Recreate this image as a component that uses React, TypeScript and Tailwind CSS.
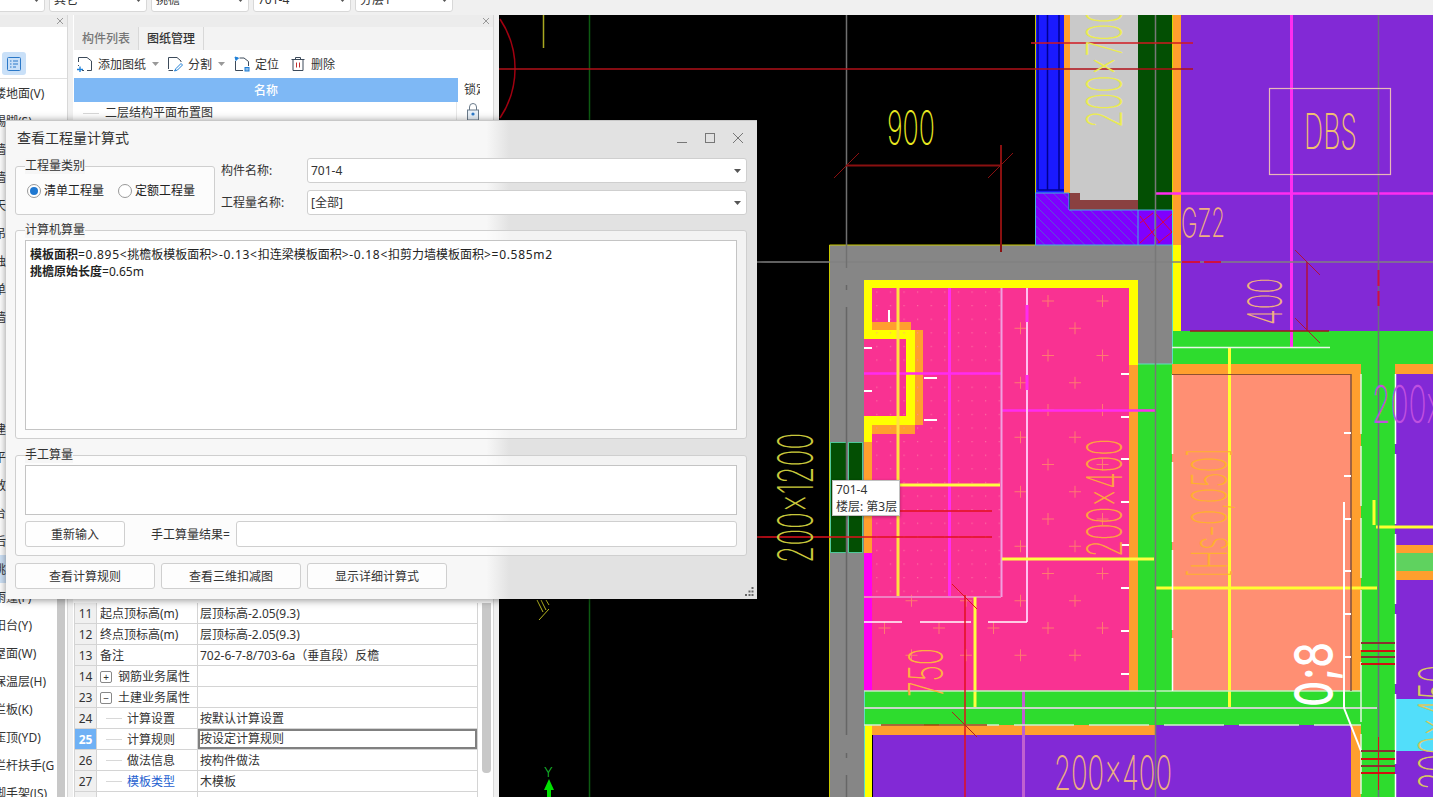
import { ReactNode } from "react";

const ORANGE = "#ff9f2e";
const PURPLE = "#8229d6";
const GREEN = "#2edc2e";
const PINK = "#f93292";
const YELLOW = "#ffff00";
const GREY = "#868686";
const MAG = "#ff2cf0";
const RED = "#e0101c";

type R = [number, number, number, number, string];
type L = [number, number, number, number, string, number?, string?];

const rects: R[] = [
  // wall
  [829, 245, 343, 35, GREY],
  [829, 245, 35, 552, GREY],
  [1138, 245, 34, 119, GREY],
  // top column
  [1035, 14, 29, 179, "#1a1aff"],
  [1064, 14, 6, 179, ORANGE],
  [1070, 14, 68, 186, "#c9c9c9"],
  [1070, 193, 10, 17, "#8a4040"],
  [1080, 200, 58, 10, "#8a4040"],
  [1138, 14, 34, 196, "#034f03"],
  [1035, 193, 34, 17, "#7f00ff"],
  [1035, 210, 103, 35, "#7f00ff"],
  [1138, 210, 34, 35, "#7f00ff"],
  // top right room
  [1181, 14, 252, 317, PURPLE],
  [1172, 14, 9, 231, ORANGE],
  [1172, 245, 9, 86, YELLOW],
  [1172, 331, 261, 33, GREEN],
  [1138, 364, 34, 327, GREEN],
  [1172, 364, 189, 10, ORANGE],
  [1172, 374, 179, 317, "#ff8f73"],
  [1351, 374, 10, 317, ORANGE],
  [1361, 364, 34, 433, GREEN],
  // right strip
  [1395, 364, 38, 10, ORANGE],
  [1395, 374, 38, 171, PURPLE],
  [1395, 545, 38, 8, ORANGE],
  [1395, 553, 38, 18, "#5fd25f"],
  [1395, 571, 38, 9, ORANGE],
  [1395, 580, 38, 119, PURPLE],
  [1395, 699, 38, 52, "#52defa"],
  [1395, 751, 38, 46, PURPLE],
  // pink slab
  [864, 280, 274, 411, PINK],
  [864, 280, 274, 8, YELLOW],
  [1129, 288, 9, 77, YELLOW],
  [1129, 365, 9, 326, ORANGE],
  [864, 288, 8, 47, YELLOW],
  [872, 322, 39, 8, ORANGE],
  [915, 330, 8, 95, ORANGE],
  [864, 330, 51, 9, YELLOW],
  [906, 330, 9, 95, YELLOW],
  [864, 416, 51, 9, YELLOW],
  [872, 425, 43, 9, ORANGE],
  [864, 425, 8, 17, YELLOW],
  [864, 442, 8, 111, ORANGE],
  [864, 553, 8, 138, "#ff00f0"],
  // bottom
  [864, 691, 497, 34, GREEN],
  [864, 725, 8, 72, YELLOW],
  [872, 725, 283, 10, ORANGE],
  [873, 735, 282, 62, PURPLE],
  [1155, 725, 196, 72, PURPLE],
  [1351, 725, 10, 72, ORANGE],
  // 701-4
  [830, 442, 17, 111, "#034f03"],
  [848, 442, 15, 111, "#034f03"],
];

const lines: L[] = [
  // blue column detail
  [1038, 14, 1038, 190, "#000090", 1.5],
  [1047.5, 14, 1047.5, 190, "#000090", 1.5],
  [1059, 14, 1059, 190, "#000090", 1.5],
  [1038, 190, 1064, 190, "#000090", 1.5],
  // edges
  [1035.5, 14, 1035.5, 245, "#c8c800"],
  [829.5, 245, 1035, 245, "#c8c800"],
  [829.5, 245, 829.5, 797, "#c8c800"],
  [1172.5, 14, 1172.5, 245, "#d8d800"],
  [1035, 193, 1069, 193, "#40b0e0"],
  [1069, 193, 1069, 210, "#40b0e0"],
  [1069, 210, 1172, 210, "#40b0e0"],
  [1035, 245, 1172, 245, "#40b0e0"],
  [1035.5, 193, 1035.5, 245, "#40b0e0"],
  [1138, 210, 1138, 245, "#40b0e0"],
  [1155, 210, 1155, 245, "#40b0e0"],
  [1172.5, 210, 1172.5, 364, "#5de0c0"],
  [1138, 364, 1172, 364, "#5de0c0"],
  [864.5, 691, 864.5, 797, "#5de0c0"],
  // red crosses
  [1140, 216, 1160, 243, "#dc0040"],
  [1155, 213, 1172, 232, "#dc0040"],
  [1140, 243, 1172, 214, "#dc0040"],
  [1140, 223, 1153, 213, "#dc0040"],
  [1158, 243, 1172, 232, "#dc0040"],
  // magenta
  [1155, 193.5, 1433, 193.5, MAG, 2.5],
  [1291.5, 14, 1291.5, 347, MAG, 3],
  [949.5, 288, 949.5, 597, MAG, 3],
  [864, 373.5, 1001, 373.5, MAG, 2.5],
  [1001, 410.5, 1155, 410.5, MAG, 2.5],
  [1001.5, 288, 1001.5, 597, "#f0a0e0", 2],
  [864, 597, 1001, 597, "#f080c0", 2],
  [1027, 288, 1027, 622, "#ffc0f0", 2],
  [1027, 305, 1027, 322, MAG, 3],
  [1027, 375, 1027, 390, MAG, 3],
  [1023.5, 691, 1023.5, 797, "#c060d0", 3],
  // yellow inside slab
  [898, 288, 898, 596, "#ffe040", 3],
  [900, 485, 1000, 485, "#ffff40", 3],
  [1002, 559, 1154, 559, "#ffff40", 3],
  [975, 597, 975, 707, "#ffff40", 3],
  [1229.5, 347, 1229.5, 707, "#ffff30", 3],
  [1156, 588, 1377, 588, "#ffff30", 3],
  [1374, 500, 1374, 525, "#ffff30", 3],
  [1376, 527, 1433, 527, "#ffff30", 3],
  // white
  [864, 622, 902, 622, "#ffffff", 1.5],
  [920, 622, 971, 622, "#ffffff", 1.5],
  [988, 622, 1027, 622, "#ffffff", 1.5],
  [864, 708, 1377, 708, "#c8d8c8", 2],
  [864, 691, 1361, 691, "#c0f0c0", 1.5],
  [864, 725, 1361, 725, "#d0f0d0", 1.5, "60 15"],
  [1172, 347.5, 1330, 347.5, "#e8f8e8", 1.5],
  [1172.5, 374, 1172.5, 691, "#ffffff", 1.5, "80 8"],
  [1361, 374, 1361, 797, "#e0f8e0", 1.5, "60 12"],
  [1395.5, 374, 1395.5, 797, "#ffffff", 1.5, "70 10"],
  [1344, 502, 1344, 708, "#ffffff", 2],
  [1344, 708, 1361, 751, "#ffffff", 2],
  [1351, 374, 1351, 691, "#805040", 1.5],
  [1172, 374.5, 1351, 374.5, "#905030", 1],
  [889, 310, 889, 322, "#ffffff", 2],
  // grey axes
  [757, 262, 1433, 262, "#808080", 1.5],
  [846.5, 14, 846.5, 268, "#707070", 1.5],
  [846.5, 285, 846.5, 290, "#666666", 1.5],
  [846.5, 307, 846.5, 735, "#666666", 1.5],
  [846.5, 753, 846.5, 758, "#666666", 1.5],
  [846.5, 775, 846.5, 797, "#666666", 1.5],
  [1155.5, 14, 1155.5, 797, "#787878", 1.5],
  [1378.5, 14, 1378.5, 797, "#6c6c80", 1.5],
  // green axis, yellow marks
  [589.5, 14, 589.5, 797, "#0d5a12", 1.5],
  [543.5, 14, 543.5, 48, "#a8a820", 1.5],
  [537, 600, 543, 612, "#b8b820"],
  [541, 600, 546, 610, "#b8b820"],
  [546, 600, 549, 605, "#b8b820"],
  [549, 609, 539, 620, "#b8b820"],
  // red dims
  [499, 69, 1193, 69, "#b01018", 1.5],
  [1031, 43, 1193, 43, "#d01820", 1.5],
  [846, 165.5, 1001, 165.5, "#8a1010", 2],
  [834, 178, 859, 153, "#8a1010"],
  [988, 178, 1013, 153, "#8a1010"],
  [1001, 145, 1001, 252, "#8a1010", 2],
  [1307, 262, 1307, 331, "#b0103a", 1.5],
  [1295, 250, 1320, 275, "#b0103a"],
  [1295, 318, 1320, 343, "#b0103a"],
  [1190, 331, 1329, 331, "#a01818", 1.5],
  [1182, 262, 1200, 262, "#d01040", 2],
  [1204, 262, 1221, 262, "#d01040", 2],
  [1378.5, 270, 1378.5, 286, "#d01040", 2],
  [1378.5, 291, 1378.5, 306, "#d01040", 2],
  [900, 511, 992, 511, RED, 1.5],
  [757, 537, 992, 537, RED, 1.5],
  [965, 595, 965, 797, RED, 1.5],
  [952, 584, 977, 609, RED],
  [952, 712, 977, 737, "#b02020"],
  [881, 725, 987, 725, "#a04010", 1.5],
  [1378.5, 737, 1378.5, 790, RED, 1],
];

const ticks: L[] = [
  ...[348, 391].map((y): L => [864, y, 872, y, "#ffffff", 2]),
  ...[378, 420].map((y): L => [924, y, 937, y, "#ffffff", 2]),
  ...[374, 417, 459, 502, 545, 588, 631, 674].map((y): L => [1121, y, 1129, y, "#ffffff", 2]),
  ...[433, 476, 519, 571, 614, 657].map((y): L => [1344, y, 1351, y, "#ffffff", 2]),
  ...[643, 657, 751, 766].map((y): L => [1361, y, 1395, y, "#8a3030", 2]),
  ...[651, 664, 759, 773].map((y): L => [1361, y, 1395, y, "#d01010", 2]),
];

const plusMarks: [number, number][] = [];
for (let r = 0; r < 14; r++) {
  const y = 301 + r * 27.25;
  for (let k = -4; k < 3; k++) {
    const x = (r % 2 === 0 ? 1048 : 1020.5) + k * 54.5;
    if (x > 1129 || x < 880) continue;
    if (y < 597 && x < 1010) continue;
    plusMarks.push([x, y]);
  }
}

// single stroke plan text: x,y = start of the baseline, w = run length, h = cap height
const PlanText = ({
  x,
  y,
  w,
  h,
  color,
  up,
  children,
  weight = 150,
}: {
  x: number;
  y: number;
  w: number;
  h: number;
  color: string;
  up?: boolean;
  children: string;
  weight?: number;
}) => (
  <text
    x={x}
    y={y}
    fill={color}
    fontFamily="Inter, 'Liberation Sans', sans-serif"
    fontWeight={weight}
    fontSize={h / 0.727}
    textLength={w}
    lengthAdjust="spacingAndGlyphs"
    transform={up ? `rotate(-90 ${x} ${y})` : undefined}
  >
    {children}
  </text>
);

const PlanCanvas = () => (
  <svg viewBox="499 15 934 782" className="block h-full w-full">
    <defs>
      <pattern id="hatch" width="10" height="10" patternUnits="userSpaceOnUse">
        <path d="M-2 -2 L12 12" stroke="#5a50d8" strokeWidth="1" />
      </pattern>
      <pattern id="dots" width="13.6" height="13.6" patternUnits="userSpaceOnUse">
        <rect x="6" y="6" width="1" height="1" fill="#ff86a8" />
      </pattern>
    </defs>
    {rects.map(([x, y, w, h, fill], i) => (
      <rect key={i} x={x} y={y} width={w} height={h} fill={fill} />
    ))}
    <rect x="1035" y="193" width="34" height="17" fill="url(#hatch)" />
    <rect x="1035" y="210" width="103" height="35" fill="url(#hatch)" />
    <rect x="872" y="288" width="129" height="309" fill="url(#dots)" />
    <path d="M500 19 A89 89 0 0 1 500 118" fill="none" stroke="#a00010" strokeWidth="1.5" />
    <rect x="830.5" y="442.5" width="16" height="110" fill="none" stroke="#4fc89a" />
    <rect x="848.5" y="442.5" width="14" height="110" fill="none" stroke="#4fc89a" />
    {plusMarks.map(([x, y], i) => (
      <path key={i} d={`M${x - 6} ${y}H${x + 6}M${x} ${y - 6}V${y + 6}`} stroke="#ff7a70" strokeWidth="1" />
    ))}
    {[...lines, ...ticks].map(([x1, y1, x2, y2, stroke, width, dash], i) => (
      <line key={i} x1={x1} y1={y1} x2={x2} y2={y2} stroke={stroke} strokeWidth={width ?? 1} strokeDasharray={dash} />
    ))}
    <rect x="1269.5" y="88.5" width="121" height="86" fill="none" stroke="#e8b8b8" strokeWidth="1.2" />
    <PlanText x={887} y={145} w={48} h={35} color="#e8e820">900</PlanText>
    <PlanText x={1304} y={149} w={53} h={36} color="#f0c070">DBS</PlanText>
    <PlanText x={1181} y={237} w={44} h={29} color="#f0b080">GZ2</PlanText>
    <PlanText x={1122} y={128} w={122} h={36} color="#ecec50" up>200x700</PlanText>
    <PlanText x={1282} y={325} w={47} h={35} color="#f0b080" up>400</PlanText>
    <PlanText x={813} y={563} w={130} h={36} color="#c8c83c" up>200x1200</PlanText>
    <PlanText x={1122} y={557} w={118} h={36} color="#ffa040" up>200x400</PlanText>
    <PlanText x={943} y={697} w={49} h={35} color="#ffb040" up>750</PlanText>
    <PlanText x={1054} y={790} w={118} h={35} color="#eeb080">200x400</PlanText>
    <PlanText x={1227} y={578} w={130} h={36} color="#ffb030" up>[Hs-0,050]</PlanText>
    <PlanText x={1333} y={707} w={65} h={39} color="#ffffff" up weight={500}>0;8</PlanText>
    <PlanText x={1372} y={423} w={70} h={38} color="#c050e0">200x</PlanText>
    <PlanText x={1454} y={790} w={125} h={36} color="#d8c860" up>200x450</PlanText>
    <text x="544" y="777" fill="#18c030" fontSize="13" fontFamily="Inter, sans-serif" fontWeight={300}>Y</text>
    <path d="M549 779 L554 790 H551 V797 H547 V790 H544 Z" fill="#00e000" />
  </svg>
);

const PanelHead = () => (
  <div className="flex h-3 shrink-0 items-center justify-end bg-[#ececec] pr-[3px] text-[#999]">
    <svg viewBox="0 0 8 8" className="h-2 w-2" fill="none" stroke="currentColor">
      <path d="M1 1L7 7M7 1L1 7" />
    </svg>
  </div>
);

const leftItems = [
  "楼地面(V)", "踢脚(S)", "墙裙(U)", "墙面(Q)", "天棚(P)", "吊顶(K)", "独立柱装修", "单梁装修", "墙洞", "", "", "",
  "建筑面积(U)", "平整场地(V)", "散水(S)", "台阶", "后浇带(JD)", "挑檐(T)", "雨篷(F)", "阳台(Y)", "屋面(W)", "保温层(H)",
  "栏板(K)", "压顶(YD)", "栏杆扶手(G", "脚手架(JS)",
];

const LeftPanel = () => (
  <aside className="flex w-[68px] shrink-0 flex-col overflow-hidden border-r border-[#d8d8d8] bg-white">
    <PanelHead />
    <div className="h-[52px] shrink-0 border-b border-[#e0e0e0] pl-[2px] pt-[25px]">
      <div className="flex h-[23px] w-6 items-center justify-center rounded-[3px] bg-[#c9e0f8]">
        <svg viewBox="0 0 16 16" className="h-4 w-4" fill="none" stroke="#2a78c8">
          <rect x="1.5" y="1.5" width="13" height="13" rx="1" />
          <path d="M4 5H5.5M7 5H12M4 8H5.5M7 8H12M4 11H5.5M7 11H10" />
        </svg>
      </div>
    </div>
    <div className="flex min-h-0 flex-1">
      <ul className="w-[57px] shrink-0 overflow-hidden">
        {leftItems.map((name, i) => (
          <li
            key={i}
            className={`flex h-7 items-center whitespace-nowrap pt-px text-xs text-[#333] ${i === 17 ? "bg-[#cfe3f8]" : ""}`}
          >
            <span className="-ml-[6px]">{name}</span>
          </li>
        ))}
      </ul>
      <div className="mt-[200px] w-2 bg-[#c8c8c8]" />
    </div>
  </aside>
);

type Row = { no: number; name: string; value?: string; kind?: "plus" | "minus" | "child" | "link" };

const propRows: Row[] = [
  { no: 11, name: "起点顶标高(m)", value: "层顶标高-2.05(9.3)" },
  { no: 12, name: "终点顶标高(m)", value: "层顶标高-2.05(9.3)" },
  { no: 13, name: "备注", value: "702-6-7-8/703-6a（垂直段）反檐" },
  { no: 14, name: "钢筋业务属性", kind: "plus" },
  { no: 23, name: "土建业务属性", kind: "minus" },
  { no: 24, name: "计算设置", value: "按默认计算设置", kind: "child" },
  { no: 25, name: "计算规则", value: "按设定计算规则", kind: "child" },
  { no: 26, name: "做法信息", value: "按构件做法", kind: "child" },
  { no: 27, name: "模板类型", value: "木模板", kind: "link" },
  { no: 28, name: "" },
];

const PropRow = ({ no, name, value, kind }: Row) => {
  const picked = no === 25;
  const child = kind === "child" || kind === "link";
  return (
    <div className="grid h-[21px] shrink-0 grid-cols-[22px_101px_1fr] border-b border-[#d4d4d4] text-xs text-[#333]">
      <div
        className={`flex items-center justify-center border-r border-[#d4d4d4] pt-px ${
          picked ? "bg-[#6fb1f5] font-bold text-white" : "bg-[#f0f0f0]"
        }`}
      >
        {no}
      </div>
      <div className="flex items-center overflow-hidden whitespace-nowrap border-r border-[#d4d4d4] pl-[3px] pt-px">
        {(kind === "plus" || kind === "minus") && (
          <span className="mr-[6px] flex h-3 w-3 shrink-0 items-center justify-center rounded-[2px] border border-[#888] text-[10px] leading-none">
            {kind === "plus" ? "+" : "−"}
          </span>
        )}
        {child && <span className="ml-[6px] mr-[5px] h-px w-4 shrink-0 bg-[#d8d8d8]" />}
        <span className={kind === "link" ? "text-[#1e5fd0]" : ""}>{name}</span>
      </div>
      <div className={`flex items-center whitespace-nowrap ${picked ? "border-2 border-[#808080]" : "pl-[2px] pt-px"}`}>{value}</div>
    </div>
  );
};

const MidPanel = () => (
  <section className="ml-[5px] flex w-[421px] shrink-0 flex-col overflow-hidden border-r border-[#d8d8d8] bg-white pl-px">
    <PanelHead />
    <div className="flex h-[23px] shrink-0 bg-[#f3f3f3] text-xs font-medium">
      <div className="flex w-[65px] items-center justify-center border-r border-[#d8d8d8] bg-[#ececec] text-[#777]">构件列表</div>
      <div className="flex w-[65px] items-center justify-center border-r border-[#d8d8d8] text-[#333]">图纸管理</div>
    </div>
    <div className="flex h-[28px] shrink-0 items-center text-xs text-[#333]">
      <svg viewBox="0 0 16 16" className="ml-[3px] h-4 w-4 shrink-0" fill="none" stroke="#3c4a5a">
        <path d="M1.5 6V1.5H10L14.5 5V14.5H10M1.5 9V10M5 14.5H7" />
        <path d="M0 13.5H6M3 10.5V16" stroke="#1c7ed6" strokeWidth="1.3" />
      </svg>
      <span className="ml-[5px] pt-px">添加图纸</span>
      <Caret className="ml-[6px] fill-[#999]" />
      <svg viewBox="0 0 16 16" className="ml-2 h-4 w-4 shrink-0" fill="none" stroke="#3c4a5a">
        <path d="M1.5 13V1.5H10L14 5V6M1.5 14.5H6" />
        <path d="M14 7.5L9 12.5L7.5 15L10.5 14L15.5 9Z" stroke="#1c7ed6" />
      </svg>
      <span className="ml-[5px] pt-px">分割</span>
      <Caret className="ml-[6px] fill-[#999]" />
      <svg viewBox="0 0 16 16" className="ml-[9px] h-4 w-4 shrink-0" fill="none" stroke="#3c4a5a">
        <path d="M5.5 2H10L14.5 5.5V10M1.5 5V14.5H9" />
        <path d="M1 1L4.5 2L2 4.5Z" fill="#1c7ed6" stroke="#1c7ed6" />
        <rect x="11" y="11.5" width="4" height="3.5" fill="#8fbce8" stroke="#1c7ed6" />
      </svg>
      <span className="ml-[5px] pt-px">定位</span>
      <svg viewBox="0 0 16 16" className="ml-[11px] h-4 w-4 shrink-0" fill="none" stroke="#3c4a5a">
        <path d="M1.5 3.5H14.5M5.5 3.5V1.5H10.5V3.5M3 3.5V14.5H13V3.5" />
        <path d="M6.5 6.5V11.5M9.5 6.5V11.5" stroke="#c03030" />
      </svg>
      <span className="ml-[5px] pt-px">删除</span>
    </div>
    <div className="flex h-6 shrink-0 text-xs">
      <div className="flex w-[384px] items-center justify-center bg-[#7eb8f5] pt-px font-medium text-white">名称</div>
      <div className="flex flex-1 items-center overflow-hidden whitespace-nowrap pl-[6px] text-[#333]">
        <span className="w-4 overflow-hidden">锁定</span>
      </div>
    </div>
    <div className="flex h-[21px] shrink-0 text-xs text-[#333]">
      <div className="flex w-[384px] items-center border-r border-[#e8e8e8] pl-[9px] pt-px">
        <span className="mr-[6px] h-px w-4 bg-[#d8d8d8]" />
        二层结构平面布置图
      </div>
      <div className="flex w-[36px] justify-start pl-[9px]">
        <svg viewBox="0 0 14 18" className="h-[18px] w-[14px]" fill="none" stroke="#6a7a8a">
          <path d="M3.5 8V5a3.5 3.5 0 0 1 7 0V8" />
          <rect x="1.5" y="8" width="11" height="10" fill="#e8f0f8" />
          <circle cx="7" cy="12" r="1.6" fill="#2a78c8" stroke="none" />
        </svg>
      </div>
    </div>
    <div className="mt-[480px] flex min-h-0 flex-1">
      <div className="flex w-[404px] shrink-0 flex-col border-x border-[#d4d4d4]">
        {propRows.map((row) => (
          <PropRow key={row.no} {...row} />
        ))}
      </div>
      <div className="ml-[4px] h-[170px] w-[9px] rounded-b-[4px] bg-[#c8c8c8]" />
    </div>
  </section>
);

const Caret = ({ className }: { className?: string }) => (
  <svg viewBox="0 0 7 4" className={`h-1 w-[7px] shrink-0 ${className ?? ""}`}>
    <path d="M0 0H7L3.5 4Z" />
  </svg>
);

const Group = ({ title, className, children }: { title: string; className: string; children: ReactNode }) => (
  <div className={`relative rounded-[3px] border border-[#cfcfcf] bg-white/60 ${className}`}>
    <span className="absolute -top-[9px] left-[9px] bg-[#f6f6f6] text-xs leading-4 text-[#333]">{title}</span>
    {children}
  </div>
);

const Combo = ({ value }: { value: string }) => (
  <div className="flex h-[25px] flex-1 items-center justify-between rounded-[3px] border border-[#cfcfcf] bg-white pl-[3px] pr-[5px] text-xs text-[#333]">
    <span className="pt-px">{value}</span>
    <Caret className="fill-[#555]" />
  </div>
);

const Radio = ({ on, label }: { on?: boolean; label: string }) => (
  <label className="flex items-center gap-[3px] text-xs text-[#222]">
    <span className="flex h-[14px] w-[14px] items-center justify-center rounded-full border border-[#999] bg-white">
      {on && <span className="h-2 w-2 rounded-full bg-[#1f78d1]" />}
    </span>
    <span className="pt-px">{label}</span>
  </label>
);

const DlgButton = ({ label, className }: { label: string; className: string }) => (
  <button
    type="button"
    className={`h-[26px] rounded-[3px] border border-[#cfcfcf] bg-white/70 pt-px text-center text-xs text-[#333] ${className}`}
  >
    {label}
  </button>
);

const Sum = ({ children }: { children: string }) => <span className="tracking-[0.7px]">{children}</span>;

const QuantityDialog = () => (
  <div className="absolute left-[6px] top-[120px] flex h-[479px] w-[751px] flex-col border-t border-[#c8c8c8] bg-[linear-gradient(to_right,#f7f7f7_64%,#e2e2e2_67%)] pl-[9px] pr-[10px] shadow-[0_1px_8px_rgba(0,0,0,0.45)]">
    <div className="relative flex h-[37px] shrink-0 items-center pb-[3px] pl-[2px] text-sm leading-5 text-[#333]">
      查看工程量计算式
      <div className="absolute right-[4px] top-[12px] flex items-start gap-[18px] text-[#777]">
        <svg viewBox="0 0 10 10" className="h-[10px] w-[10px]" fill="none" stroke="currentColor">
          <path d="M0 9.5H10" />
        </svg>
        <svg viewBox="0 0 10 10" className="h-[10px] w-[10px]" fill="none" stroke="currentColor">
          <rect x="0.5" y="0.5" width="9" height="9" />
        </svg>
        <svg viewBox="0 0 10 10" className="h-[10px] w-[10px]" fill="none" stroke="currentColor">
          <path d="M0 0L10 10M10 0L0 10" />
        </svg>
      </div>
    </div>
    <div className="flex shrink-0">
      <Group title="工程量类别" className="mt-2 flex h-[49px] w-[200px] items-center gap-[14px] pl-[11px]">
        <Radio on label="清单工程量" />
        <Radio label="定额工程量" />
      </Group>
      <div className="ml-[6px] flex flex-1 flex-col gap-[7px] text-xs text-[#333]">
        <div className="flex items-center">
          <span className="w-[86px] shrink-0 pt-px">构件名称:</span>
          <Combo value="701-4" />
        </div>
        <div className="flex items-center">
          <span className="w-[86px] shrink-0 pt-px">工程量名称:</span>
          <Combo value="[全部]" />
        </div>
      </div>
    </div>
    <Group title="计算机算量" className="mt-[15px] h-[209px] shrink-0 px-[9px] pt-[9px]">
      <div className="h-[190px] border border-[#c4c4c4] bg-white px-[4px] pt-[5px] text-xs leading-[17px] text-[#222]">
        <p>
          <b>模板面积</b>
          <Sum>=0.895&lt;</Sum>挑檐板模板面积<Sum>&gt;-0.13&lt;</Sum>扣连梁模板面积<Sum>&gt;-0.18&lt;</Sum>扣剪力墙模板面积
          <Sum>&gt;=0.585m2</Sum>
        </p>
        <p>
          <b>挑檐原始长度</b>=0.65m
        </p>
      </div>
    </Group>
    <Group title="手工算量" className="mt-4 h-[101px] shrink-0 px-[9px] pt-[9px]">
      <div className="h-[50px] border border-[#c4c4c4] bg-white" />
      <div className="mt-[6px] flex items-center text-xs text-[#333]">
        <DlgButton label="重新输入" className="w-[100px]" />
        <span className="ml-[26px] mr-[6px] pt-px">手工算量结果=</span>
        <div className="h-[26px] flex-1 rounded-[3px] border border-[#cfcfcf] bg-white" />
      </div>
    </Group>
    <div className="mt-[7px] flex shrink-0 gap-[6px]">
      <DlgButton label="查看计算规则" className="w-[140px]" />
      <DlgButton label="查看三维扣减图" className="w-[140px]" />
      <DlgButton label="显示详细计算式" className="w-[140px]" />
    </div>
    <svg viewBox="0 0 9 9" className="absolute bottom-[3px] right-[3px] h-[9px] w-[9px]" fill="#666">
      <rect x="6.5" y="0" width="2" height="2" />
      <rect x="3.5" y="3.5" width="2" height="2" />
      <rect x="6.5" y="3.5" width="2" height="2" />
      <rect x="0" y="7" width="2" height="2" />
      <rect x="3.5" y="7" width="2" height="2" />
      <rect x="6.5" y="7" width="2" height="2" />
    </svg>
  </div>
);

const topCombos = ["", "其它", "挑檐", "701-4", "分层1"];

export default function App() {
  return (
    <div className="relative flex h-[797px] w-[1433px] flex-col overflow-hidden bg-[#f0f0f0] font-['Noto_Sans','Noto_Sans_CJK_SC',sans-serif]">
      <div className="flex h-[15px] shrink-0 gap-1 overflow-hidden">
        {topCombos.map((name, i) => (
          <div
            key={i}
            className={`-mt-3 flex h-6 w-[98px] shrink-0 items-center justify-between rounded-[3px] border border-[#d8d8d8] bg-white px-[4px] text-xs text-[#333] ${
              i === 0 ? "-ml-[53px]" : ""
            }`}
          >
            {name}
            <Caret className="ml-auto fill-[#555]" />
          </div>
        ))}
      </div>
      <div className="flex min-h-0 flex-1">
        <LeftPanel />
        <MidPanel />
        <main className="ml-[5px] min-w-0 flex-1 bg-black">
          <PlanCanvas />
        </main>
      </div>
      <QuantityDialog />
      <div className="absolute left-[832px] top-[480px] h-9 w-[68px] border border-[#c0c0c0] bg-white px-[3px] text-xs leading-[17px] text-[#333] shadow-[0_1px_3px_rgba(0,0,0,0.3)]">
        <div>701-4</div>
        <div className="whitespace-nowrap">楼层: 第3层</div>
      </div>
    </div>
  );
}
